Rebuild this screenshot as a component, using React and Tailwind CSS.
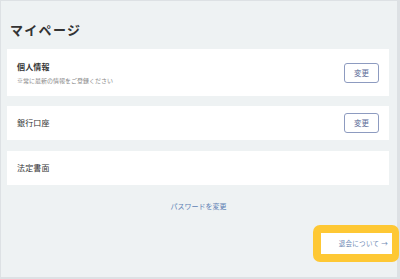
export default function App() {
  const font = { fontFamily: '"Noto Sans CJK JP", "Noto Sans", sans-serif' };
  return (
    <div className="w-[400px] h-[279px] bg-[#dde1e4] pt-px pl-px overflow-hidden" style={font}>
      <div className="w-[396px] h-[276px] bg-[#eef2f3] flex flex-col pl-[6px] pr-[8px]">
        <h1 className="mt-[21px] ml-[3px] text-[13px] leading-[16px] font-bold text-[#333] tracking-[0.1em]">マイページ</h1>
        <div className="mt-[11px] bg-white h-[47px] flex items-center justify-between pl-[10px] pr-[10px]">
          <div className="flex flex-col">
            <span className="text-[8px] leading-[10px] font-bold text-[#333] mt-[1px] tracking-[0.02em]">個人情報</span>
            <span className="text-[6px] leading-[8px] text-[#888] mt-[5px]">※常に最新の情報をご登録ください</span>
          </div>
          <button className="w-[35px] h-[20px] border border-[#8d9bc0] rounded-[3px] text-[7.5px] text-[#5b6b98] flex items-center justify-center">変更</button>
        </div>
        <div className="mt-[10px] bg-white h-[34px] flex items-center justify-between pl-[10px] pr-[10px]">
          <span className="text-[8px] leading-[10px] text-[#333] tracking-[0.02em]">銀行口座</span>
          <button className="w-[35px] h-[20px] border border-[#8d9bc0] rounded-[3px] text-[7.5px] text-[#5b6b98] flex items-center justify-center">変更</button>
        </div>
        <div className="mt-[11px] bg-white h-[34px] flex items-center pl-[10px]">
          <span className="text-[8px] leading-[10px] text-[#333] tracking-[0.02em]">法定書面</span>
        </div>
        <div className="mt-[16px] text-center text-[7px] leading-[10px] text-[#5d7fb4] pl-[1px]">パスワードを変更</div>
        <div className="mt-[14px] flex justify-end mr-[-10px]">
          <div className="w-[86px] h-[37px] rounded-[7px] bg-[#fec834] p-[8px] pr-[7px] flex">
            <div className="flex-1 bg-white flex items-center justify-end pr-[4px] text-[6.5px] tracking-[0.05em] text-[#6f8ab5]">退会について&nbsp;→</div>
          </div>
        </div>
      </div>
    </div>
  );
}
